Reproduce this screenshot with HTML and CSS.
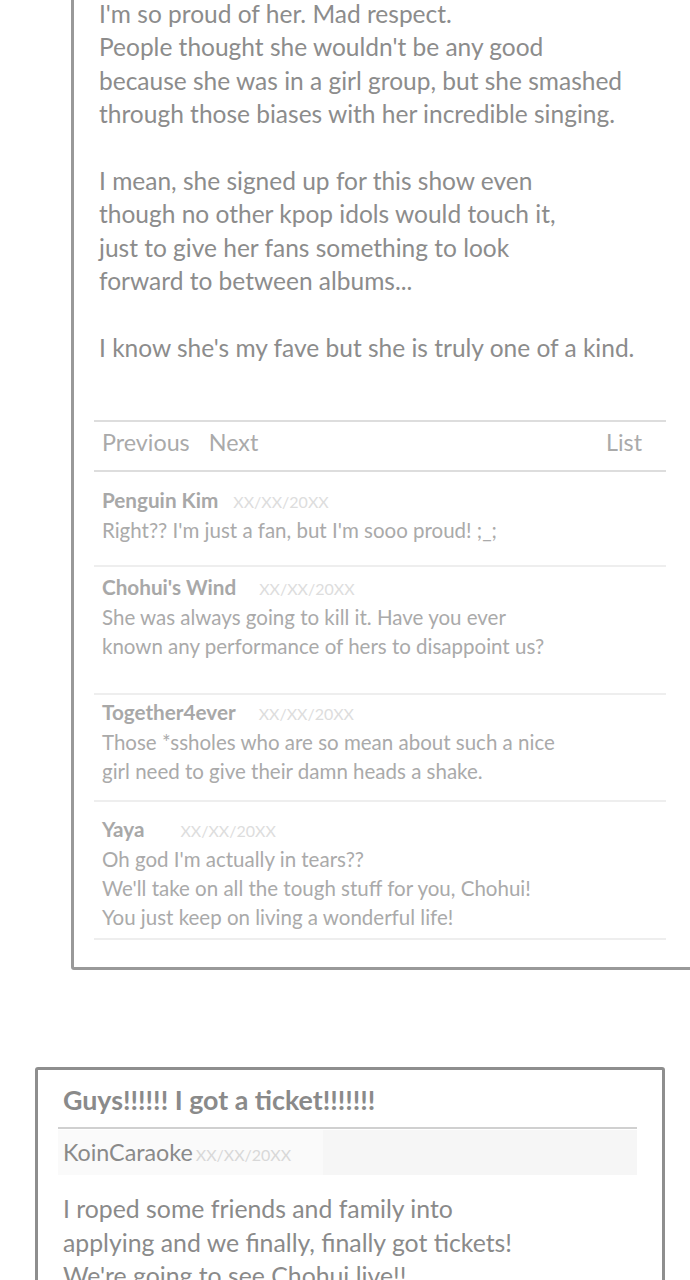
FILE: index.html
```html
<!DOCTYPE html>
<html lang="en">
<head>
<meta charset="utf-8">
<title>Fan board</title>
<link rel="stylesheet" href="styles.css">
</head>
<body>
<div class="page">
  <article class="card card-post">
    <div class="post-body">
      <p>I'm so proud of her. Mad respect.<br>People thought she wouldn't be any good<br>because she was in a girl group, but she smashed<br>through those biases with her incredible singing.</p>
      <p>I mean, she signed up for this show even<br>though no other kpop idols would touch it,<br>just to give her fans something to look<br>forward to between albums...</p>
      <p>I know she's my fave but she is truly one of a kind.</p>
    </div>
    <nav class="post-nav">
      <div class="nav-left"><span>Previous</span><span>Next</span></div>
      <span>List</span>
    </nav>
    <ul class="comments">
      <li class="comment c1">
        <div class="c-head"><b class="c-name">Penguin Kim</b><span class="c-date">XX/XX/20XX</span></div>
        <div class="c-text">Right?? I'm just a fan, but I'm sooo proud! ;_;</div>
      </li>
      <li class="comment c2">
        <div class="c-head"><b class="c-name">Chohui's Wind</b><span class="c-date">XX/XX/20XX</span></div>
        <div class="c-text">She was always going to kill it. Have you ever<br>known any performance of hers to disappoint us?</div>
      </li>
      <li class="comment c3">
        <div class="c-head"><b class="c-name">Together4ever</b><span class="c-date">XX/XX/20XX</span></div>
        <div class="c-text">Those *ssholes who are so mean about such a nice<br>girl need to give their damn heads a shake.</div>
      </li>
      <li class="comment c4">
        <div class="c-head"><b class="c-name">Yaya</b><span class="c-date d-wide">XX/XX/20XX</span></div>
        <div class="c-text">Oh god I'm actually in tears??<br>We'll take on all the tough stuff for you, Chohui!<br>You just keep on living a wonderful life!</div>
      </li>
    </ul>
  </article>

  <article class="card card-second">
    <h2 class="title">Guys!!!!!! I got a ticket!!!!!!!</h2>
    <div class="meta"><span class="meta-inner"><span class="meta-name">KoinCaraoke</span><span class="meta-date">XX/XX/20XX</span></span></div>
    <div class="second-body">
      <p>I roped some friends and family into<br>applying and we finally, finally got tickets!<br>We're going to see Chohui live!!</p>
    </div>
  </article>
</div>
</body>
</html>
```

FILE: styles.css
```css
* { box-sizing: border-box; }
html, body {
  margin: 0;
  padding: 0;
  background: #fff;
  overflow-x: hidden;
}
body {
  font-family: Lato, "Open Sans", sans-serif;
  color: #888;
  width: 690px;
  height: 1280px;
  overflow: hidden;
}
.page {
  display: flex;
  flex-direction: column;
  align-items: flex-start;
}

.card {
  border: 3px solid #999;
  border-radius: 3px;
  background: #fff;
}

.card-post {
  margin-top: -43px;
  margin-left: 71px;
  width: 640px;
  padding: 37px 42px 27px 20px;
}

.post-body {
  padding-left: 5px;
  font-size: 24.5px;
  line-height: 33.4px;
  color: #8c8c8c;
}
.post-body p { margin: 0 0 33.4px; }
.post-body p:last-child { margin-bottom: 0; }

.post-nav {
  margin-top: 56px;
  display: flex;
  justify-content: space-between;
  border-top: 2px solid #ddd;
  border-bottom: 2px solid #ddd;
  padding: 5px 24px 13px 8px;
  font-size: 23.3px;
  line-height: 30px;
  color: #aaa;
}
.nav-left { display: flex; gap: 19px; }

.comments {
  list-style: none;
  margin: 0;
  padding: 0;
}
.comment {
  border-bottom: 2px solid #eee;
  padding-left: 8px;
}
.c-head {
  display: flex;
  align-items: baseline;
  line-height: 29px;
}
.c-name {
  font-weight: 700;
  font-size: 20.7px;
  color: #a8a8a8;
}
.c-date {
  margin-left: 15px;
  font-size: 16px;
  color: #ddd;
}
.c2 .c-date, .c3 .c-date { margin-left: 23px; }
.c-date.d-wide { margin-left: 36px; }
.c-text {
  font-size: 20.5px;
  line-height: 29px;
  color: #aaa;
}
.c1 { padding-top: 14px; padding-bottom: 20px; }
.c2 { padding-top: 6px; padding-bottom: 32px; }
.c3 { padding-top: 3px; padding-bottom: 14px; }
.c4 { padding-top: 13px; padding-bottom: 6px; }

.card-second {
  margin-top: 97px;
  margin-left: 35px;
  width: 630px;
  padding: 13px 25px 20px 20px;
  border-color: #8e8e8e;
}
.title {
  margin: 0;
  padding: 0 0 10px 5px;
  font-size: 26.8px;
  line-height: 34px;
  font-weight: 700;
  color: #8a8a8a;
  border-bottom: 2px solid #d0d0d0;
}
.meta {
  margin-top: 1px;
  background: #f6f6f6;
  height: 45px;
  display: flex;
  align-items: center;
}
.meta-inner {
  display: flex;
  align-items: baseline;
  padding: 0 32px 0 5px;
  background: #fafafa;
  height: 45px;
  line-height: 45px;
}
.meta-name {
  font-size: 23.3px;
  color: #8a8a8a;
}
.meta-date {
  margin-left: 3px;
  font-size: 16px;
  color: #d8d8d8;
}
.second-body {
  padding: 17px 0 0 5px;
  font-size: 24.8px;
  line-height: 33.4px;
  color: #8a8a8a;
}
.second-body p { margin: 0; }
```
